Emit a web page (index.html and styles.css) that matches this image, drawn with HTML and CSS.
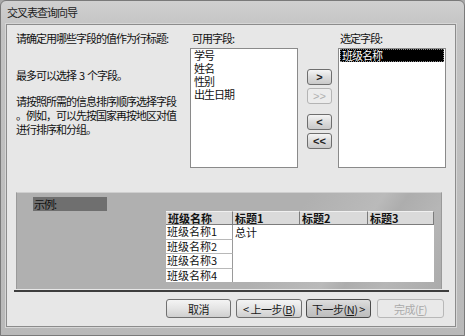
FILE: index.html
```html
<!DOCTYPE html>
<html lang="zh">
<head>
  <meta charset="UTF-8" />
  <title>交叉表查询向导</title>
  <link rel="stylesheet" href="styles.css">
</head>
<body>
  <div class="window">
    <div class="titlebar">交叉表查询向导</div>
    <div class="client">

      <div class="fields">
        <div class="intro">
          <p>请确定用哪些字段的值作为行标题:</p>
          <p class="limit">最多可以选择&nbsp; 3&nbsp; 个字段。</p>
          <p class="hint">请按照所需的信息排序顺序选择字段<br>。例如，可以先按国家再按地区对值<br>进行排序和分组。</p>
        </div>
        <div class="pick">
          <div class="pick-label">可用字段:</div>
          <ul class="list">
            <li>学号</li>
            <li>姓名</li>
            <li>性别</li>
            <li>出生日期</li>
          </ul>
        </div>
        <div class="moves">
          <button class="mv">&gt;</button>
          <button class="mv" disabled>&gt;&gt;</button>
          <button class="mv gap">&lt;</button>
          <button class="mv">&lt;&lt;</button>
        </div>
        <div class="pick">
          <div class="pick-label">选定字段:</div>
          <ul class="list">
            <li class="sel">班级名称</li>
          </ul>
        </div>
      </div>

      <!-- preview of the crosstab -->
      <div class="sample">
        <div class="sample-label">示例:</div>
        <div class="grid">
          <div class="hd">班级名称</div>
          <div class="hd">标题1</div>
          <div class="hd">标题2</div>
          <div class="hd">标题3</div>
          <div class="rh r1">班级名称1</div>
          <div class="rh r2">班级名称2</div>
          <div class="rh r3">班级名称3</div>
          <div class="rh r4">班级名称4</div>
          <div class="data">总计</div>
        </div>
      </div>
      <div class="sep"></div>

      <div class="actions">
        <button class="btn">取消</button>
        <button class="btn prev">&lt; 上一步(<u>B</u>)</button>
        <button class="btn next">下一步(<u>N</u>) &gt;</button>
        <button class="btn finish" disabled>完成(<u>F</u>)</button>
      </div>
    </div>
  </div>
</body>
</html>
```

FILE: styles.css
```css
body {
  margin: 0;
  background: #a9a9a9;
  font-family: "Noto Sans CJK SC", sans-serif;
  font-size: 11px;
  color: #111;
}
.window {
  width: 465px;
  height: 336px;
  box-sizing: border-box;
  background: linear-gradient(#d0d0d0, #c2c2c2 30px, #b9b9b9);
  border: 1px solid #7a7a7a;
  border-radius: 6px 6px 0 0;
  padding: 0 8px 6px 5px;
}
.titlebar {
  height: 23px;
  line-height: 22px;
  padding-left: 1px;
  letter-spacing: -1px;
  color: #222;
}
.client {
  height: 303px;
  box-sizing: border-box;
  background: #e7e7e7;
  border: 1px solid #8c8c8c;
  box-shadow: 0 0 0 1px #d6d6d6;
}
p {
  margin: 0;
}
/* top part: text, two lists and the move buttons */
.fields {
  display: grid;
  grid-template-columns: 174px 108px 40px 108px;
  padding: 6px 0 0 9px;
  height: 143px;
  box-sizing: border-box;
  letter-spacing: -1px;
  line-height: 14px;
}
.intro .limit {
  margin-top: 23px;
}
.intro .hint {
  margin-top: 12px;
}
.pick-label {
  height: 14px;
  margin-bottom: 3px;
  padding-left: 2px;
}
.list {
  list-style: none;
  margin: 0;
  padding: 0 1px;
  height: 120px;
  box-sizing: border-box;
  background: #fff;
  border: 1px solid #8a8a8a;
  line-height: 13px;
}
.list li {
  padding-left: 2px;
}
.list li.sel {
  background: #000;
  color: #fff;
  outline: 1px dotted #888;
  outline-offset: -1px;
}
.moves {
  display: flex;
  flex-direction: column;
  padding: 38px 0 0 9px;
  gap: 3px;
}
.moves .gap {
  margin-top: 7px;
}
.mv {
  width: 25px;
  height: 16px;
  padding: 0;
  font-family: "Liberation Sans", sans-serif;
  font-size: 11px;
  font-weight: bold;
  line-height: 12px;
  color: #222;
  border: 1px solid #6e6e6e;
  border-radius: 3px;
  background: linear-gradient(#f5f5f5, #dcdcdc 50%, #c9c9c9);
}
.mv:disabled {
  color: #b0b0b0;
  font-weight: normal;
  border-color: #b4b4b4;
  background: #ececec;
}
/* example panel */
.sample {
  margin: 24px 0 0 9px;
  width: 426px;
  height: 97px;
  box-sizing: border-box;
  padding: 4px 0 0 16px;
  background: linear-gradient(125deg, #b0b0b0 60%, #bababa 75%, #adadad 80%, #b6b6b6 88%, #ababab);
  border-top: 1px solid #cfcfcf;
  border-left: 1px solid #9a9a9a;
  border-right: 1px solid #9a9a9a;
}
.sample-label {
  width: 74px;
  height: 14px;
  line-height: 14px;
  background: #6f6f6f;
  color: #111;
  letter-spacing: -1px;
  padding-left: 1px;
  box-sizing: border-box;
}
.grid {
  display: grid;
  grid-template-columns: 67px 67px 68px 66px;
  grid-template-rows: 14px 15px 14px 15px 13px;
  margin-left: 133px;
  width: 268px;
  background: #fff;
  font-size: 11px;
  line-height: 13px;
}
.hd {
  background: #dadada;
  border-right: 1px solid #7c7c7c;
  border-bottom: 1px solid #7c7c7c;
  border-top: 1px solid #f0f0f0;
  font-weight: bold;
  padding-left: 2px;
  line-height: 12px;
}
.rh {
  grid-column: 1;
  border-bottom: 1px solid #b8b8b8;
  border-right: 1px solid #9a9a9a;
  padding-left: 1px;
}
.r4 {
  border-bottom: none;
}
.data {
  grid-column: 2 / 5;
  grid-row: 2 / 6;
  padding: 1px 0 0 2px;
}
.sep {
  margin: 1px 6px 0 7px;
  height: 2px;
  background: #3e3e3e;
}
/* bottom buttons */
.actions {
  display: flex;
  padding: 7px 0 0 159px;
}
.btn {
  height: 19px;
  width: 65px;
  padding: 0;
  font-family: "Noto Sans CJK SC", sans-serif;
  font-size: 11px;
  letter-spacing: -0.5px;
  color: #1a1a1a;
  border: 1px solid #707070;
  border-radius: 3px;
  background: linear-gradient(#f4f4f4, #e4e4e4 50%, #cfcfcf);
}
.btn.prev {
  margin-left: 5px;
  width: 66px;
}
.btn.next {
  margin-left: 4px;
  border-color: #4c4c4c;
  background: linear-gradient(#dedede, #cbcbcb 50%, #bdbdbd);
}
.btn.finish {
  margin-left: 6px;
  width: 67px;
  color: #ababab;
  border-color: #b8b8b8;
  background: #e9e9e9;
}
```
